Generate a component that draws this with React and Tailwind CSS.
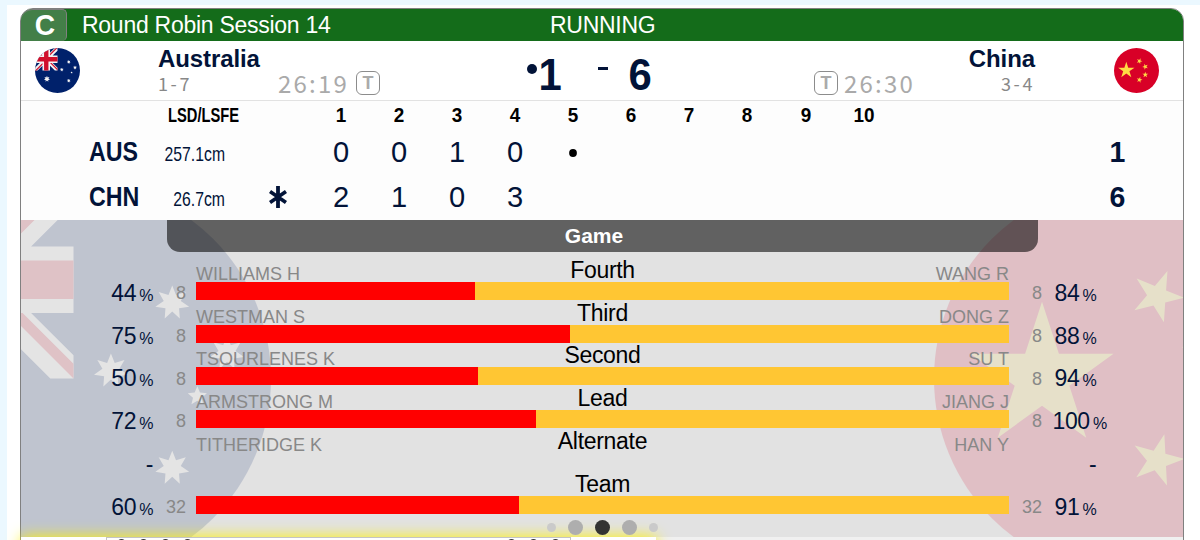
import { clsx } from "clsx";

const ENDS = ["1", "2", "3", "4", "5", "6", "7", "8", "9", "10"];

const LINES = [
  { code: "AUS", draw: "257.1cm", hammer: false, ends: ["0", "0", "1", "0", "•"], total: "1" },
  { code: "CHN", draw: "26.7cm", hammer: true, ends: ["2", "1", "0", "3"], total: "6" },
];

// split = red share of the bar in px (bar is 813px wide)
const STATS = [
  { label: "Fourth", left: "WILLIAMS H", right: "WANG R", shots: 8, pctLeft: 44, pctRight: 84, split: 279 },
  { label: "Third", left: "WESTMAN S", right: "DONG Z", shots: 8, pctLeft: 75, pctRight: 88, split: 374 },
  { label: "Second", left: "TSOURLENES K", right: "SU T", shots: 8, pctLeft: 50, pctRight: 94, split: 282 },
  { label: "Lead", left: "ARMSTRONG M", right: "JIANG J", shots: 8, pctLeft: 72, pctRight: 100, split: 340 },
  { label: "Alternate", left: "TITHERIDGE K", right: "HAN Y" },
  { label: "Team", shots: 32, pctLeft: 60, pctRight: 91, split: 323 },
];

function starPoints(cx, cy, r, spikes, inner, turn = 0) {
  const pts = [];
  for (let i = 0; i < spikes * 2; i++) {
    const a = ((turn - 90) * Math.PI) / 180 + (i * Math.PI) / spikes;
    const d = i % 2 ? r * inner : r;
    pts.push(`${(cx + d * Math.cos(a)).toFixed(1)},${(cy + d * Math.sin(a)).toFixed(1)}`);
  }
  return pts.join(" ");
}

function AustraliaFlag({ id, className }) {
  return (
    <svg viewBox="0 0 512 512" className={className}>
      <clipPath id={id}>
        <circle cx="256" cy="256" r="256" />
      </clipPath>
      <g clipPath={`url(#${id})`}>
        <path fill="#00216b" d="M0 0h512v512H0z" />
        <path
          fill="#f4f4f4"
          d="M0 0h30l55 55V0h86v55l55-55h30v30l-55 55h55v86h-55l55 55v30h-30l-55-55v55H85v-55l-55 55H0v-30l55-55H0V85h55L0 30z"
        />
        <path
          fill="#d0102c"
          d="M103 0h50v103h103v50H153v103h-50V153H0v-50h103zM0 0v19l66 66h19zM256 256v-19l-66-66h-19zM256 0h-19l-66 66v19zM0 256h19l66-66v-19z"
        />
        <g fill="#f4f4f4">
          <polygon points={starPoints(136, 353, 36, 7, 0.5)} />
          <polygon points={starPoints(384, 158, 22.5, 7, 0.5)} />
          <polygon points={starPoints(455, 223, 22.5, 7, 0.5)} />
          <polygon points={starPoints(304.5, 246, 22.5, 7, 0.5)} />
          <polygon points={starPoints(384, 372, 22.5, 7, 0.5)} />
          <polygon points={starPoints(416.5, 279, 13, 5, 0.45)} />
        </g>
      </g>
    </svg>
  );
}

function ChinaFlag({ className }) {
  return (
    <svg viewBox="0 0 512 512" className={className}>
      <circle cx="256" cy="256" r="256" fill="#d80027" />
      <g fill="#ffda44">
        <polygon points={starPoints(140, 254, 97.5, 5, 0.382)} />
        <polygon points={starPoints(289.5, 149, 35, 5, 0.382, 22)} />
        <polygon points={starPoints(356, 213, 35, 5, 0.382, 50)} />
        <polygon points={starPoints(356, 304, 35, 5, 0.382, 0)} />
        <polygon points={starPoints(289.5, 362, 35, 5, 0.382, 15)} />
      </g>
    </svg>
  );
}

function TimeoutBadge() {
  return (
    <span className="flex h-6 w-6 items-center justify-center rounded-[6px] border border-[#8c8c8c] text-lg font-bold leading-none text-[#aaa]">
      T
    </span>
  );
}

function Clock({ children }) {
  return (
    <span className="font-['Noto_Sans_CJK_SC',sans-serif] text-2xl leading-6 tracking-[2.2px] text-[#aaa]">
      {children}
    </span>
  );
}

function Team({ name, record }) {
  return (
    <>
      <div className="text-2xl font-bold leading-7 tracking-[-0.1px]">{name}</div>
      <div className="font-['Noto_Sans_CJK_SC',sans-serif] text-lg leading-5 tracking-[2.6px] text-[#888]">
        {record}
      </div>
    </>
  );
}

function Percent({ value, className }) {
  return (
    <div className={clsx("flex items-baseline text-[23px] leading-6 tracking-[-0.4px] text-[#021338]", className)}>
      {value == null ? (
        "-"
      ) : (
        <>
          {value}
          <span className="ml-[3.2px] text-base tracking-[-0.5px]">%</span>
        </>
      )}
    </div>
  );
}

function rightOffset(value) {
  if (value == null) return "ml-[47px]";
  return value > 99 ? "ml-[10.5px]" : "ml-[12.6px]";
}

function StatRow({ row }) {
  const hasBar = row.split != null;
  return (
    <div className="flex h-[42.8px]">
      <div className="flex w-[132px] justify-end pt-[23px]">
        <Percent value={row.pctLeft} />
      </div>
      <div className="w-[33px] pt-[25.2px] text-right text-lg leading-5 text-[#888]">{row.shots}</div>
      <div className="ml-[10px] w-[813px]">
        <div className="grid h-6 grid-cols-3 whitespace-nowrap">
          <span className="pt-[6px] text-lg leading-5 text-[#888]">{row.left}</span>
          <span className="text-center text-[23px] leading-6 tracking-[-0.3px] text-black">{row.label}</span>
          <span className="pt-[6px] text-right text-lg leading-5 text-[#888]">{row.right}</span>
        </div>
        {hasBar && (
          <div className="h-[18px] bg-[#ffc633]">
            <div className="h-full bg-[#f00]" style={{ width: row.split }} />
          </div>
        )}
      </div>
      <div className="w-[33px] pt-[25.2px] text-right text-lg leading-5 text-[#888]">{row.shots}</div>
      <div className="flex pt-[23px]">
        <Percent value={row.pctRight} className={rightOffset(row.pctRight)} />
      </div>
    </div>
  );
}

export default function App() {
  return (
    <div className="h-[540px] w-[1200px] overflow-hidden bg-[#ebf8ff] pl-[7px] pt-[5px] font-['Liberation_Sans',Arial,sans-serif]">
      <div className="h-full bg-white pl-[13px] pt-[3px]">
        <div className="flex h-[560px] w-[1164px] flex-col rounded-t-[13px] border border-[#808080]">
          <header className="flex h-8 shrink-0 items-center rounded-t-[12px] bg-[#146c1a] text-[23px] tracking-[-0.27px] text-white">
            <div className="flex h-8 w-[46px] items-center justify-center rounded-tl-[12px] rounded-r-[5px] border-r border-t border-[#808080] bg-[#437f48] pl-[2px] text-[30px] font-bold leading-8 tracking-normal">
              <span className="-mt-0.5 scale-x-[0.94]">C</span>
            </div>
            <span className="ml-[15px] w-[468px]">Round Robin Session 14</span>
            <span>RUNNING</span>
          </header>

          <section className="flex h-[60px] shrink-0 border-b border-[#e2e2e2] text-[#021338]">
            <AustraliaFlag id="au-small" className="ml-[14px] mt-[7px] h-[45px] w-[45px]" />
            <div className="ml-[78px] w-[120px] pt-1">
              <Team name="Australia" record="1-7" />
            </div>
            <div className="flex w-[102px] items-start justify-between pt-[30px]">
              <Clock>26:19</Clock>
              <TimeoutBadge />
            </div>
            <div className="flex w-[434px] pl-[147px] pt-[9px] text-[44px] font-bold leading-[50px]">
              <i className="mr-px mt-[14px] h-[10px] w-[10px] rounded-full bg-[#021338]" />
              <span className="scale-x-95">1</span>
              <i className="ml-[36px] mt-[17px] h-[3px] w-[10px] bg-[#021338]" />
              <span className="ml-[20px] scale-x-95">6</span>
            </div>
            <div className="flex w-[102px] items-start gap-[6px] pt-[30px]">
              <TimeoutBadge />
              <Clock>26:30</Clock>
            </div>
            <div className="w-[119px] pt-1 text-right">
              <Team name="China" record="3-4" />
            </div>
            <ChinaFlag className="ml-[79px] mt-[7px] h-[45px] w-[45px]" />
          </section>

          <section className="h-[119px] shrink-0 bg-[#fdfdfd] text-[#021338]">
            <div className="flex h-7 text-[21px] font-bold leading-7 text-black">
              <span className="ml-[147px] w-[143.5px] origin-left scale-x-[0.7]">LSD/LSFE</span>
              {ENDS.map((n) => (
                <span key={n} className="w-[58.15px] scale-x-90 text-center">{n}</span>
              ))}
            </div>
            {LINES.map((line) => (
              <div key={line.code} className="flex h-[45px] items-center">
                <span className="ml-[67.5px] w-[76.5px] origin-left scale-x-[0.86] pt-[2px] text-[27px] font-bold">
                  {line.code}
                </span>
                <span className="w-[60px] origin-right scale-x-75 whitespace-nowrap text-right text-[21px]">
                  <span className="float-right pt-[5px]">{line.draw}</span>
                </span>
                <span className="flex w-[86.5px] justify-center pl-[19px]">
                  {line.hammer && (
                    <svg viewBox="0 0 18 22" className="h-[22px] w-[18px]" stroke="#021338" strokeWidth="3.8">
                      <path d="M9 0v22M1 5.5l16 11M17 5.5l-16 11" />
                    </svg>
                  )}
                </span>
                <div className="flex w-[797.5px] text-[30px]">
                  {line.ends.map((score, i) => (
                    <span key={i} className="flex w-[58.15px] scale-x-[0.97] items-center justify-center">
                      {score === "•" ? <i className="mt-0.5 h-2 w-2 rounded-full bg-black" /> : score}
                    </span>
                  ))}
                </div>
                <span className="scale-x-95 text-[30px] font-bold">{line.total}</span>
              </div>
            ))}
          </section>

          <section className="relative h-[317px] shrink-0 bg-[#e2e2e2]">
            <div className="absolute inset-0 overflow-hidden">
              <AustraliaFlag id="au-large" className="absolute left-[-145px] top-[-39px] h-[395px] w-[395px] max-w-none opacity-15" />
              <ChinaFlag className="absolute left-[913px] top-[-39px] h-[395px] w-[395px] max-w-none opacity-15" />
            </div>
            <div className="relative z-10">
              <h2 className="ml-[146px] h-8 w-[871px] rounded-b-[13px] bg-black/57 pr-[17px] text-center text-[21px] font-bold leading-8 text-white">
                Game
              </h2>
              <div className="pt-[5.8px]">
                {STATS.map((row) => (
                  <StatRow key={row.label} row={row} />
                ))}
              </div>
              <div className="ml-[525.5px] mt-[5.2px] flex w-[111px] items-center justify-between">
                <i className="h-[9px] w-[9px] rounded-full bg-[#cacaca]" />
                <i className="h-[15px] w-[15px] rounded-full bg-[#aeaeae]" />
                <i className="h-[15px] w-[15px] rounded-full bg-[#333]" />
                <i className="h-[15px] w-[15px] rounded-full bg-[#aeaeae]" />
                <i className="h-[9px] w-[9px] rounded-full bg-[#cacaca]" />
              </div>
            </div>
          </section>

          <section className="h-5 shrink-0 bg-[#f0f0f0]">
            <div className="relative flex h-5 w-[635px] bg-white shadow-[0_0_15px_#fff200]">
              <div className="w-[85px]" />
              <div className="flex w-[465px] border-x border-t border-[#c4c4c4] pl-[10px]">
                <div className="flex gap-[13px] pt-px">
                  {[0, 1, 2, 3].map((n) => (
                    <i key={n} className="h-[9px] w-[9px] rounded-full border-2 border-[#333]" />
                  ))}
                </div>
                <div className="ml-[315px] flex gap-[13px] pt-px">
                  {[0, 1, 2].map((n) => (
                    <i key={n} className="h-[9px] w-[9px] rounded-full border-2 border-[#333]" />
                  ))}
                </div>
              </div>
            </div>
          </section>
        </div>
      </div>
    </div>
  );
}
